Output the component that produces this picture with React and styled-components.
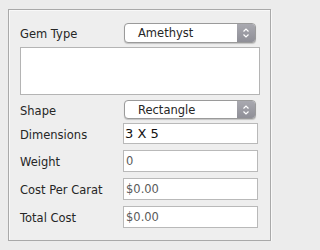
import styled, { createGlobalStyle } from "styled-components";

const GlobalStyle = createGlobalStyle`
  html, body {
    margin: 0;
    padding: 0;
    background: #ececec;
  }
  * {
    box-sizing: border-box;
  }
`;

const Panel = styled.div`
  margin: 9px 0 0 8px;
  width: 263px;
  height: 232px;
  border: 1px solid #a9a9a9;
  box-shadow: inset 1px 1px 0 #f8f8f8, 1px 1px 0 #f8f8f8;
  background: #eeeeee;
  padding: 12px 10px 0 11px;
  display: flex;
  flex-direction: column;
  font-family: "DejaVu Sans", "Liberation Sans", sans-serif;
  font-size: 11.5px;
  color: #262626;
`;

const Row = styled.div`
  display: grid;
  grid-template-columns: 103px 1fr;
  align-items: center;
  height: ${(p) => p.$h}px;
  margin-top: ${(p) => p.$top || 0}px;
`;

const Label = styled.span`
  padding-top: 2px;
`;

const Select = styled.div`
  position: relative;
  margin-left: 1px;
  width: 132px;
  height: ${(p) => p.$h}px;
  background: #fff;
  border: 1px solid #9a9a9a;
  border-radius: 4px;
  box-shadow: 0 1px 1px rgba(0, 0, 0, 0.18);
  display: flex;
  align-items: center;
  padding-left: 13px;
  overflow: hidden;
`;

const Stepper = styled.span`
  position: absolute;
  right: 0;
  top: 0;
  bottom: 0;
  width: 18px;
  background: linear-gradient(#a9a9b0, #8f8f97);
  display: flex;
  align-items: center;
  justify-content: center;
`;

const Notes = styled.div`
  margin-top: 4px;
  width: 240px;
  height: 48px;
  background: #fff;
  border: 1px solid #b4b4b4;
`;

const Field = styled.div`
  width: 135px;
  height: ${(p) => p.$h}px;
  background: #fff;
  border: 1px solid #b9b9b9;
  display: flex;
  align-items: center;
  padding-left: ${(p) => (p.$dark ? 1 : 2)}px;
  font-size: ${(p) => (p.$dark ? 13 : 11.5)}px;
  color: ${(p) => (p.$dark ? "#111" : "#5a5a5a")};
`;

function Arrows() {
  return (
    <svg width="8" height="12" viewBox="0 0 8 12">
      <path d="M1.5 4.5 L4 2 L6.5 4.5 M1.5 7.5 L4 10 L6.5 7.5" fill="none" stroke="#fff" strokeWidth="1.2" />
    </svg>
  );
}

export default function App() {
  return (
    <>
      <GlobalStyle />
      <Panel>
        <Row $h={21}>
          <Label>Gem Type</Label>
          <Select $h={20}>
            Amethyst
            <Stepper>
              <Arrows />
            </Stepper>
          </Select>
        </Row>
        <Notes />
        <Row $h={19} $top={5}>
          <Label>Shape</Label>
          <Select $h={19}>
            Rectangle
            <Stepper>
              <Arrows />
            </Stepper>
          </Select>
        </Row>
        <Row $h={21} $top={4}>
          <Label>Dimensions</Label>
          <Field $h={21} $dark>3 X 5</Field>
        </Row>
        <Row $h={22} $top={6}>
          <Label>Weight</Label>
          <Field $h={22}>0</Field>
        </Row>
        <Row $h={22} $top={6}>
          <Label>Cost Per Carat</Label>
          <Field $h={22}>$0.00</Field>
        </Row>
        <Row $h={22} $top={6}>
          <Label>Total Cost</Label>
          <Field $h={22}>$0.00</Field>
        </Row>
      </Panel>
    </>
  );
}
